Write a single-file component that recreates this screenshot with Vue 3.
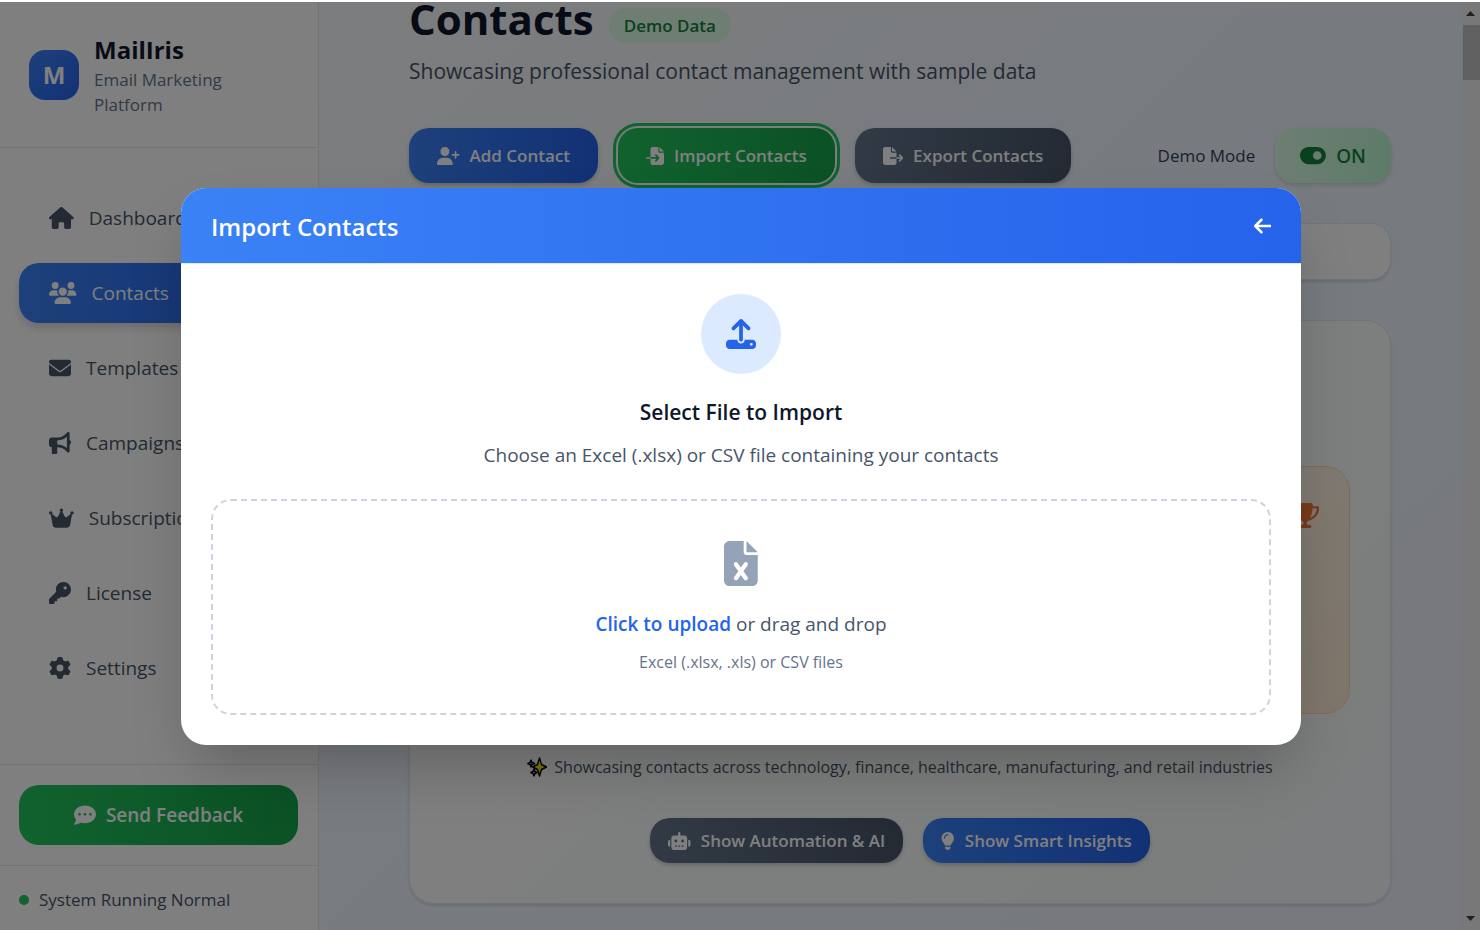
<script setup>
import { h } from 'vue'

const icons = {
  house: [576, 'M575.8 255.5c0 18-15 32.1-32 32.1h-32l.7 160.2c0 2.7-.2 5.4-.5 8.1V472c0 22.1-17.9 40-40 40H456c-1.1 0-2.2 0-3.3-.1c-1.4 .1-2.8 .1-4.2 .1H416 392c-22.1 0-40-17.9-40-40V448 384c0-17.7-14.3-32-32-32H256c-17.7 0-32 14.3-32 32v64 24c0 22.1-17.9 40-40 40H160 128.1c-1.5 0-3-.1-4.5-.2c-1.2 .1-2.4 .2-3.6 .2H104c-22.1 0-40-17.9-40-40V360c0-.9 0-1.9 .1-2.8V287.6H32c-18 0-32-14-32-32.1c0-9 3-17 10-24L266.4 8c7-7 15-8 22-8s15 2 21 7L564.8 231.5c8 7 12 15 11 24z'],
  users: [640, 'M144 0a80 80 0 1 1 0 160A80 80 0 1 1 144 0zM512 0a80 80 0 1 1 0 160A80 80 0 1 1 512 0zM0 298.7C0 239.8 47.8 192 106.7 192h42.7c15.9 0 31 3.5 44.6 9.7c-1.3 7.2-1.9 14.7-1.9 22.3c0 38.2 16.8 72.5 43.3 96c-.2 0-.4 0-.7 0H21.3C9.6 320 0 310.4 0 298.7zM405.3 320c-.2 0-.4 0-.7 0c26.6-23.5 43.3-57.8 43.3-96c0-7.6-.7-15-1.9-22.3c13.6-6.3 28.7-9.7 44.6-9.7h42.7C592.2 192 640 239.8 640 298.7c0 11.8-9.6 21.3-21.3 21.3H405.3zM224 224a96 96 0 1 1 192 0 96 96 0 1 1 -192 0zM128 485.3C128 411.7 187.7 352 261.3 352H378.7C452.3 352 512 411.7 512 485.3c0 14.7-11.9 26.7-26.7 26.7H154.7c-14.7 0-26.7-11.9-26.7-26.7z'],
  envelope: [512, 'M48 64C21.5 64 0 85.5 0 112c0 15.1 7.1 29.3 19.2 38.4L236.8 313.6c11.4 8.5 27 8.5 38.4 0L492.8 150.4c12.1-9.1 19.2-23.3 19.2-38.4c0-26.5-21.5-48-48-48H48zM0 176V384c0 35.3 28.7 64 64 64H448c35.3 0 64-28.7 64-64V176L294.4 339.2c-22.8 17.1-54 17.1-76.8 0L0 176z'],
  bullhorn: [512, 'M480 32c0-12.9-7.8-24.6-19.8-29.6s-25.7-2.2-34.9 6.9L381.7 53c-48 48-113.1 75-181 75H192 160 64c-35.3 0-64 28.7-64 64v96c0 35.3 28.7 64 64 64l0 128c0 17.7 14.3 32 32 32h64c17.7 0 32-14.3 32-32V352l8.7 0c67.9 0 133 27 181 75l43.6 43.6c9.2 9.2 22.9 11.9 34.9 6.9s19.8-16.6 19.8-29.6V300.4c18.6-8.8 32-32.5 32-60.4s-13.4-51.6-32-60.4V32zm-64 76.7V240 371.3C357.2 317.8 280.5 288 200.7 288H192V192h8.7c79.8 0 156.5-29.8 215.3-83.3z'],
  crown: [576, 'M309 106c11.4-7 19-19.7 19-34c0-22.1-17.9-40-40-40s-40 17.9-40 40c0 14.4 7.6 27 19 34L209.7 220.6c-9.1 18.2-32.7 23.4-48.6 10.7L72 160c5-6.7 8-15 8-24c0-22.1-17.9-40-40-40S0 113.9 0 136s17.9 40 40 40c.2 0 .5 0 .7 0L86.4 427.4c5.5 30.4 32 52.6 63 52.6H426.6c30.9 0 57.4-22.1 63-52.6L535.3 176c.2 0 .5 0 .7 0c22.1 0 40-17.9 40-40s-17.9-40-40-40s-40 17.9-40 40c0 9 3 17.3 8 24l-89.1 71.3c-15.9 12.7-39.5 7.5-48.6-10.7L309 106z'],
  key: [512, 'M336 352c97.2 0 176-78.8 176-176S433.2 0 336 0S160 78.8 160 176c0 18.7 2.9 36.8 8.3 53.7L7 391c-4.5 4.5-7 10.6-7 17v80c0 13.3 10.7 24 24 24h80c13.3 0 24-10.7 24-24V448h40c13.3 0 24-10.7 24-24V384h40c6.4 0 12.5-2.5 17-7l33.3-33.3c16.9 5.4 35 8.3 53.7 8.3zM376 96a40 40 0 1 1 0 80 40 40 0 1 1 0-80z'],
  gear: [512, 'M495.9 166.6c3.2 8.7 .5 18.4-6.4 24.6l-43.3 39.4c1.1 8.3 1.7 16.8 1.7 25.4s-.6 17.1-1.7 25.4l43.3 39.4c6.9 6.2 9.6 15.9 6.4 24.6c-4.4 11.9-9.7 23.3-15.8 34.3l-4.7 8.1c-6.6 11-14 21.4-22.1 31.2c-5.9 7.2-15.7 9.6-24.5 6.8l-55.7-17.7c-13.4 10.3-28.2 18.9-44 25.4l-12.5 57.1c-2 9.1-9 16.3-18.2 17.8c-13.8 2.3-28 3.5-42.5 3.5s-28.7-1.2-42.5-3.5c-9.2-1.5-16.2-8.7-18.2-17.8l-12.5-57.1c-15.8-6.5-30.6-15.1-44-25.4L83.1 425.9c-8.8 2.8-18.6 .3-24.5-6.8c-8.1-9.8-15.5-20.2-22.1-31.2l-4.7-8.1c-6.1-11-11.4-22.4-15.8-34.3c-3.2-8.7-.5-18.4 6.4-24.6l43.3-39.4C64.6 273.1 64 264.6 64 256s.6-17.1 1.7-25.4L22.4 191.2c-6.9-6.2-9.6-15.9-6.4-24.6c4.4-11.9 9.7-23.3 15.8-34.3l4.7-8.1c6.6-11 14-21.4 22.1-31.2c5.9-7.2 15.7-9.6 24.5-6.8l55.7 17.7c13.4-10.3 28.2-18.9 44-25.4l12.5-57.1c2-9.1 9-16.3 18.2-17.8C227.3 1.2 241.5 0 256 0s28.7 1.2 42.5 3.5c9.2 1.5 16.2 8.7 18.2 17.8l12.5 57.1c15.8 6.5 30.6 15.1 44 25.4l55.7-17.7c8.8-2.8 18.6-.3 24.5 6.8c8.1 9.8 15.5 20.2 22.1 31.2l4.7 8.1c6.1 11 11.4 22.4 15.8 34.3zM256 336a80 80 0 1 0 0-160 80 80 0 1 0 0 160z'],
  comment: [512, 'M256 448c141.4 0 256-93.1 256-208S397.4 32 256 32S0 125.1 0 240c0 45.1 17.7 86.8 47.7 120.9c-1.9 24.5-11.4 46.3-21.4 62.9c-5.5 9.2-11.1 16.6-15.2 21.6c-2.1 2.5-3.7 4.4-4.9 5.7c-.6 .6-1 1.1-1.3 1.4l-.3 .3c-4.6 4.6-5.9 11.4-3.4 17.4c2.5 6 8.3 9.9 14.8 9.9c28.7 0 57.6-8.9 81.6-19.3c22.9-10 42.4-21.9 54.3-30.6c31.8 11.5 67 17.9 104.1 17.9zM128 208a32 32 0 1 1 0 64 32 32 0 1 1 0-64zm128 0a32 32 0 1 1 0 64 32 32 0 1 1 0-64zm96 32a32 32 0 1 1 64 0 32 32 0 1 1 -64 0z'],
  userPlus: [640, 'M96 128a128 128 0 1 1 256 0A128 128 0 1 1 96 128zM0 482.3C0 383.8 79.8 304 178.3 304h91.4C368.2 304 448 383.8 448 482.3c0 16.4-13.3 29.7-29.7 29.7H29.7C13.3 512 0 498.7 0 482.3zM504 312V248H440c-13.3 0-24-10.7-24-24s10.7-24 24-24h64V136c0-13.3 10.7-24 24-24s24 10.7 24 24v64h64c13.3 0 24 10.7 24 24s-10.7 24-24 24H552v64c0 13.3-10.7 24-24 24s-24-10.7-24-24z'],
  fileImport: [512, 'M128 64c0-35.3 28.7-64 64-64H352V128c0 17.7 14.3 32 32 32H512V448c0 35.3-28.7 64-64 64H192c-35.3 0-64-28.7-64-64V336H302.1l-39 39c-9.4 9.4-9.4 24.6 0 33.9s24.6 9.4 33.9 0l80-80c9.4-9.4 9.4-24.6 0-33.9l-80-80c-9.4-9.4-24.6-9.4-33.9 0s-9.4 24.6 0 33.9l39 39H128V64zm0 224v48H24c-13.3 0-24-10.7-24-24s10.7-24 24-24H128zM512 128H384V0L512 128z'],
  fileExport: [576, 'M0 64C0 28.7 28.7 0 64 0H224V128c0 17.7 14.3 32 32 32H384V288H216c-13.3 0-24 10.7-24 24s10.7 24 24 24H384V448c0 35.3-28.7 64-64 64H64c-35.3 0-64-28.7-64-64V64zM384 336V288H494.1l-39-39c-9.4-9.4-9.4-24.6 0-33.9s24.6-9.4 33.9 0l80 80c9.4 9.4 9.4 24.6 0 33.9l-80 80c-9.4 9.4-24.6 9.4-33.9 0s-9.4-24.6 0-33.9l39-39H384zm0-208H256V0L384 128z'],
  toggleOn: [576, 'M192 64C86 64 0 150 0 256S86 448 192 448H384c106 0 192-86 192-192s-86-192-192-192H192zm192 96a96 96 0 1 1 0 192 96 96 0 1 1 0-192z'],
  arrowLeft: [448, 'M9.4 233.4c-12.5 12.5-12.5 32.8 0 45.3l160 160c12.5 12.5 32.8 12.5 45.3 0s12.5-32.8 0-45.3L109.2 288 416 288c17.7 0 32-14.3 32-32s-14.3-32-32-32l-306.7 0L214.6 118.6c12.5-12.5 12.5-32.8 0-45.3s-32.8-12.5-45.3 0l-160 160z'],
  upload: [512, 'M288 109.3V352c0 17.7-14.3 32-32 32s-32-14.3-32-32V109.3l-73.4 73.4c-12.5 12.5-32.8 12.5-45.3 0s-12.5-32.8 0-45.3l128-128c12.5-12.5 32.8-12.5 45.3 0l128 128c12.5 12.5 12.5 32.8 0 45.3s-32.8 12.5-45.3 0L288 109.3zM64 352H192c0 35.3 28.7 64 64 64s64-28.7 64-64H448c35.3 0 64 28.7 64 64v32c0 35.3-28.7 64-64 64H64c-35.3 0-64-28.7-64-64V416c0-35.3 28.7-64 64-64zM432 456a24 24 0 1 0 0-48 24 24 0 1 0 0 48z'],
  fileExcel: [384, 'M64 0C28.7 0 0 28.7 0 64V448c0 35.3 28.7 64 64 64H320c35.3 0 64-28.7 64-64V160H256c-17.7 0-32-14.3-32-32V0H64zM256 0V128H384L256 0zM155.7 250.2L192 302.1l36.3-51.9c7.6-10.9 22.6-13.5 33.4-5.9s13.5 22.6 5.9 33.4L221.3 344l46.4 66.2c7.6 10.9 5 25.8-5.9 33.4s-25.8 5-33.4-5.9L192 385.8l-36.3 51.9c-7.6 10.9-22.6 13.5-33.4 5.9s-13.5-22.6-5.9-33.4L162.7 344l-46.4-66.2c-7.6-10.9-5-25.8 5.9-33.4s25.8-5 33.4 5.9z'],
  trophy: [576, 'M400 0H176c-26.5 0-48.1 21.8-47.1 48.2c.2 5.3 .4 10.6 .7 15.8H24C10.7 64 0 74.7 0 88c0 92.6 33.5 157 78.5 200.7c44.3 43.1 98.3 64.8 138.1 75.8c23.4 6.5 39.4 26 39.4 45.6c0 20.9-17 37.9-37.9 37.9H192c-17.7 0-32 14.3-32 32s14.3 32 32 32H384c17.7 0 32-14.3 32-32s-14.3-32-32-32H357.9C337 448 320 431 320 410.1c0-19.6 15.9-39.2 39.4-45.6c39.9-11 93.9-32.7 138.2-75.8C542.5 245 576 180.6 576 88c0-13.3-10.7-24-24-24H446.4c.3-5.2 .5-10.4 .7-15.8C448.1 21.8 426.5 0 400 0zM48.9 112h84.4c9.1 90.1 29.2 150.3 51.9 190.6c-24.9-11-50.8-26.5-73.2-48.3c-32-31.1-58-76-63-142.3zM464.1 254.3c-22.4 21.8-48.3 37.3-73.2 48.3c22.7-40.3 42.8-100.5 51.9-190.6h84.4c-5.1 66.3-31.1 111.2-63 142.3z'],
  robot: [640, 'M320 0c17.7 0 32 14.3 32 32V96H472c39.8 0 72 32.2 72 72V440c0 39.8-32.2 72-72 72H168c-39.8 0-72-32.2-72-72V168c0-39.8 32.2-72 72-72H288V32c0-17.7 14.3-32 32-32zM208 384c-8.8 0-16 7.2-16 16s7.2 16 16 16h32c8.8 0 16-7.2 16-16s-7.2-16-16-16H208zm96 0c-8.8 0-16 7.2-16 16s7.2 16 16 16h32c8.8 0 16-7.2 16-16s-7.2-16-16-16H304zm96 0c-8.8 0-16 7.2-16 16s7.2 16 16 16h32c8.8 0 16-7.2 16-16s-7.2-16-16-16H400zM264 256a40 40 0 1 0 -80 0 40 40 0 1 0 80 0zm152 40a40 40 0 1 0 0-80 40 40 0 1 0 0 80zM48 224H64V416H48c-26.5 0-48-21.5-48-48V272c0-26.5 21.5-48 48-48zm544 0c26.5 0 48 21.5 48 48v96c0 26.5-21.5 48-48 48H576V224h16z'],
  lightbulb: [384, 'M272 384c9.6-31.9 29.5-59.1 49.2-86.2l0 0c5.2-7.1 10.4-14.2 15.4-21.4c19.8-28.5 31.4-63 31.4-100.3C368 78.8 289.2 0 192 0S16 78.8 16 176c0 37.3 11.6 71.9 31.4 100.3c5 7.2 10.2 14.3 15.4 21.4l0 0c19.8 27.1 39.7 54.4 49.2 86.2H272zM192 512c44.2 0 80-35.8 80-80V416H112v16c0 44.2 35.8 80 80 80zM112 176c0 8.8-7.2 16-16 16s-16-7.2-16-16c0-61.9 50.1-112 112-112c8.8 0 16 7.2 16 16s-7.2 16-16 16c-44.2 0-80 35.8-80 80z'],
}

const Icon = (props) =>
  h('svg', { viewBox: `0 0 ${icons[props.name][0]} 512`, fill: 'currentColor', 'aria-hidden': 'true' }, [
    h('path', { d: icons[props.name][1] }),
  ])
Icon.props = ['name']

const navItems = [
  { label: 'Dashboard', icon: 'house' },
  { label: 'Contacts', icon: 'users', active: true },
  { label: 'Templates', icon: 'envelope' },
  { label: 'Campaigns', icon: 'bullhorn' },
  { label: 'Subscription', icon: 'crown' },
  { label: 'License', icon: 'key' },
  { label: 'Settings', icon: 'gear' },
]
</script>

<template>
  <div class="app">
    <aside class="sidebar">
      <header class="brand">
        <div class="logo">M</div>
        <div>
          <div class="brand-name">MailIris</div>
          <div class="brand-sub">Email Marketing Platform</div>
        </div>
      </header>
      <nav class="nav">
        <a v-for="item in navItems" :key="item.label" href="#" class="nav-item" :class="{ active: item.active }">
          <Icon class="icon-nav" :name="item.icon" />
          <span>{{ item.label }}</span>
        </a>
      </nav>
      <div class="feedback">
        <button type="button" class="feedback-btn">
          <Icon class="icon-nav" name="comment" />
          <span>Send Feedback</span>
        </button>
      </div>
      <footer class="status"><span class="dot"></span>System Running Normal</footer>
    </aside>

    <main class="main">
      <div class="title-row">
        <h1>Contacts</h1>
        <span class="badge">Demo Data</span>
      </div>
      <p class="subtitle">Showcasing professional contact management with sample data</p>

      <div class="toolbar">
        <button type="button" class="btn blue"><Icon class="icon-btn" name="userPlus" />Add Contact</button>
        <button type="button" class="btn green focused"><Icon class="icon-btn" name="fileImport" />Import Contacts</button>
        <button type="button" class="btn slate"><Icon class="icon-btn" name="fileExport" />Export Contacts</button>
        <div class="mode">
          <span id="demo-mode">Demo Mode</span>
          <button type="button" class="toggle" aria-labelledby="demo-mode" aria-pressed="true">
            <Icon class="icon-toggle" name="toggleOn" />ON
          </button>
        </div>
      </div>

      <section class="filters"></section>

      <section class="overview">
        <div class="tiles">
          <article class="tile"><Icon class="icon-tile" name="trophy" /></article>
        </div>
        <p class="note">
          <svg class="sparkles" viewBox="0 0 20 20" aria-hidden="true">
            <g stroke="#000" stroke-width="1.4" stroke-linejoin="round">
              <path fill="#fde400" d="M12.5 1l2 6.500 5 2.500-5 2.500-2 6.500-2-6.500-5-2.500 5-2.500z" />
              <path fill="#3cc8ea" d="M4 3l1 2.500 2.500 1-2.500 1L4 10 3 7.500.800 6.500 3 5.500z" />
              <path fill="#f59ac0" d="M7 12l1 2.500 2.200 1-2.200 1L7 19l-1-2.500-2.200-1 2.200-1z" />
            </g>
          </svg>
          Showcasing contacts across technology, finance, healthcare, manufacturing, and retail industries
        </p>
        <div class="actions">
          <button type="button" class="btn small slate"><Icon class="icon-btn" name="robot" />Show Automation &amp; AI</button>
          <button type="button" class="btn small blue"><Icon class="icon-btn" name="lightbulb" />Show Smart Insights</button>
        </div>
      </section>
    </main>

    <div class="scrollbar" aria-hidden="true">
      <svg class="scroll-arrow" viewBox="0 0 9 5"><path d="M4.500 0L9 5H0z" /></svg>
      <div class="track"><div class="thumb"></div></div>
      <svg class="scroll-arrow" viewBox="0 0 9 5"><path d="M0 0h9L4.500 5z" /></svg>
    </div>

    <div class="overlay">
      <div class="modal" role="dialog" aria-modal="true" aria-labelledby="modal-title">
        <header class="modal-head">
          <h2 id="modal-title">Import Contacts</h2>
          <button type="button" class="back" aria-label="Back"><Icon class="icon-back" name="arrowLeft" /></button>
        </header>
        <div class="modal-body">
          <div class="circle"><Icon class="icon-upload" name="upload" /></div>
          <h3>Select File to Import</h3>
          <p class="lead">Choose an Excel (.xlsx) or CSV file containing your contacts</p>
          <label class="drop" for="contact-file">
            <input id="contact-file" class="file" type="file" accept=".xlsx,.xls,.csv" />
            <Icon class="icon-file" name="fileExcel" />
            <span class="drop-main"><strong>Click to upload</strong> or drag and drop</span>
            <span class="drop-hint">Excel (.xlsx, .xls) or CSV files</span>
          </label>
        </div>
      </div>
    </div>
  </div>
</template>

<style>
body {
  margin: 0;
  background: #fff;
}
</style>

<style scoped>
* {
  box-sizing: border-box;
}
.app {
  position: relative;
  display: flex;
  height: 100vh;
  overflow: hidden;
  border-top: 2px solid #fff;
  font-family: 'Segoe UI', 'Open Sans', 'Noto Sans', sans-serif;
  font-size: 19px;
  color: #475569;
}
h1, h2, h3, p {
  margin: 0;
}
button {
  border: 0;
  font-family: inherit;
  cursor: pointer;
}
svg {
  flex: none;
  display: block;
}

/* Sidebar */
.sidebar {
  display: flex;
  flex-direction: column;
  flex: none;
  width: 319px;
  background: #fff;
  border-right: 1px solid #e2e8f0;
}
.brand {
  display: flex;
  align-items: center;
  gap: 15px;
  padding: 30px 29px;
  border-bottom: 1px solid #e2e8f0;
}
.logo {
  display: flex;
  align-items: center;
  justify-content: center;
  flex: none;
  width: 50px;
  height: 50px;
  border-radius: 16px;
  background: linear-gradient(135deg, #3b82f6, #2563eb);
  color: #fff;
  font-size: 24px;
  font-weight: 700;
}
.brand-name {
  font-size: 24px;
  line-height: 35px;
  font-weight: 700;
  color: #0f172a;
}
.brand-sub {
  font-size: 17px;
  line-height: 25px;
  color: #64748b;
}
.nav {
  display: flex;
  flex-direction: column;
  flex: 1;
  gap: 15px;
  padding: 40px 20px 0 19px;
}
.nav-item {
  display: flex;
  align-items: center;
  gap: 15px;
  height: 60px;
  padding: 0 30px;
  border-radius: 20px;
  color: #475569;
  text-decoration: none;
}
.nav-item.active {
  color: #fff;
  background: linear-gradient(90deg, #3b82f6, #2563eb);
  box-shadow: 0 5px 8px rgba(0, 0, 0, 0.15);
}
.icon-nav {
  height: 22px;
}
.feedback {
  padding: 20px 20px 20px 19px;
  border-top: 1px solid #e2e8f0;
}
.feedback-btn {
  display: flex;
  align-items: center;
  justify-content: center;
  gap: 10px;
  width: 100%;
  height: 60px;
  border-radius: 20px;
  background: linear-gradient(90deg, #22c55e, #16a34a);
  color: #fff;
  font-size: 19px;
  font-weight: 600;
}
.status {
  display: flex;
  align-items: center;
  gap: 10px;
  height: 65px;
  padding: 3px 19px 0;
  border-top: 1px solid #e2e8f0;
  font-size: 17px;
}
.dot {
  width: 10px;
  height: 10px;
  border-radius: 50%;
  background: #22c55e;
}

/* Page content */
.main {
  flex: 1;
  min-width: 0;
  padding: 0 70px 0 90px;
  background: linear-gradient(135deg, #f8fafc, #eff6ff 50%, #eef2ff);
}
.title-row {
  display: flex;
  justify-content: flex-start;
  gap: 15px;
}
h1 {
  font-size: 42px;
  line-height: 34px;
  font-weight: 700;
  color: #0f172a;
}
.badge {
  height: 35px;
  margin-top: 6px;
  padding: 0 15px;
  border-radius: 18px;
  background: #dcfce7;
  color: #15803d;
  font-size: 17px;
  line-height: 36px;
  font-weight: 600;
}
.subtitle {
  margin-top: 10px;
  font-size: 21px;
  line-height: 36px;
}
.toolbar {
  display: flex;
  align-items: center;
  gap: 20px;
  margin-top: 39px;
}
.btn {
  display: flex;
  align-items: center;
  gap: 10px;
  height: 55px;
  padding: 0 28px;
  border-radius: 20px;
  color: #fff;
  font-size: 17px;
  font-weight: 600;
  white-space: nowrap;
  box-shadow: 0 2px 4px rgba(0, 0, 0, 0.2);
}
.btn.small {
  height: 45px;
  padding: 0 18px;
}
.blue {
  background: linear-gradient(90deg, #3b82f6, #2563eb);
}
.green {
  background: linear-gradient(90deg, #22c55e, #16a34a);
}
.slate {
  background: linear-gradient(90deg, #64748b, #475569);
}
.btn.focused {
  box-shadow: 0 0 0 2px #f8fafc, 0 0 0 5px #22c55e;
}
.icon-btn {
  height: 18px;
}
.mode {
  display: flex;
  align-items: center;
  gap: 20px;
  margin-left: auto;
  font-size: 17px;
  font-weight: 500;
  color: #334155;
}
.toggle {
  display: flex;
  align-items: center;
  gap: 10px;
  height: 55px;
  padding: 0 25px;
  border-radius: 20px;
  background: linear-gradient(90deg, #dcfce7, #bbf7d0);
  color: #15803d;
  font-size: 19px;
  font-weight: 600;
  box-shadow: 0 2px 4px rgba(0, 0, 0, 0.15);
}
.icon-toggle {
  height: 23px;
}
.filters {
  height: 57px;
  margin-top: 40px;
  border: 1px solid #e2e8f0;
  border-radius: 20px;
  background: #fff;
  box-shadow: 0 2px 3px rgba(0, 0, 0, 0.12);
}
.overview {
  margin-top: 40px;
  padding: 145px 40px 40px;
  border: 1px solid #e2e8f0;
  border-radius: 25px;
  background: linear-gradient(135deg, #fff, #fafffc 60%, #f8fafc);
  box-shadow: 0 2px 3px rgba(0, 0, 0, 0.12);
}
.tiles {
  display: grid;
  grid-template-columns: repeat(4, 1fr);
  gap: 30px;
}
.tile {
  grid-column: 4;
  display: flex;
  justify-content: flex-end;
  height: 248px;
  padding: 36px 30px;
  border: 1px solid #fed7aa;
  border-radius: 25px;
  background: linear-gradient(135deg, #fff7ed, #ffedd5);
}
.icon-tile {
  height: 25px;
  color: #ea580c;
  opacity: 0.8;
}
.note {
  display: flex;
  align-items: center;
  justify-content: center;
  gap: 7px;
  margin-top: 40px;
  font-size: 16px;
  line-height: 26px;
  white-space: nowrap;
}
.sparkles {
  width: 20px;
  height: 20px;
}
.actions {
  display: flex;
  justify-content: center;
  gap: 20px;
  margin-top: 38px;
}

/* Scrollbar */
.scrollbar {
  display: flex;
  flex-direction: column;
  align-items: center;
  flex: none;
  width: 19px;
  padding: 9px 0;
  background: #f1f1f1;
}
.scroll-arrow {
  width: 9px;
  height: 5px;
  fill: #404040;
}
.track {
  flex: 1;
  align-self: stretch;
  padding: 9px 0 9px 2px;
}
.thumb {
  height: 55px;
  background: #c1c1c1;
}

/* Import dialog */
.overlay {
  position: absolute;
  inset: 0;
  display: flex;
  align-items: center;
  justify-content: center;
  padding: 20px 18px 20px 20px;
  background: rgba(0, 0, 0, 0.5);
}
.modal {
  width: 100%;
  max-width: 1120px;
  overflow: hidden;
  border-radius: 25px;
  background: #fff;
  box-shadow: 0 31px 62px -15px rgba(0, 0, 0, 0.25);
}
.modal-head {
  display: flex;
  align-items: center;
  justify-content: space-between;
  height: 76px;
  padding: 2px 30px 0;
  border-bottom: 1px solid #e2e8f0;
  background: linear-gradient(90deg, #3b82f6, #2563eb) padding-box;
  color: #fff;
}
.modal-head h2 {
  font-size: 24px;
  line-height: 35px;
  font-weight: 600;
}
.back {
  padding: 0;
  background: none;
  color: #fff;
}
.icon-back {
  height: 20px;
}
.modal-body {
  display: flex;
  flex-direction: column;
  align-items: center;
  padding: 30px;
}
.circle {
  display: flex;
  align-items: center;
  justify-content: center;
  width: 80px;
  height: 80px;
  border-radius: 50%;
  background: #dbeafe;
  color: #2563eb;
}
.icon-upload {
  height: 30px;
}
.modal-body h3 {
  margin-top: 21px;
  font-size: 21px;
  line-height: 35px;
  font-weight: 600;
  color: #0f172a;
}
.lead {
  margin-top: 10px;
  line-height: 30px;
}
.drop {
  position: relative;
  display: flex;
  flex-direction: column;
  align-items: center;
  align-self: stretch;
  margin-top: 29px;
  padding: 40px 0 38px;
  border: 2px dashed #cbd5e1;
  border-radius: 20px;
  cursor: pointer;
}
.file {
  position: absolute;
  inset: 0;
  width: 100%;
  height: 100%;
  opacity: 0;
}
.icon-file {
  height: 45px;
  color: #94a3b8;
}
.drop-main {
  margin-top: 23px;
  line-height: 30px;
}
.drop-main strong {
  font-weight: 600;
  color: #2563eb;
}
.drop-hint {
  margin-top: 10px;
  font-size: 16px;
  line-height: 26px;
  color: #64748b;
}
</style>
